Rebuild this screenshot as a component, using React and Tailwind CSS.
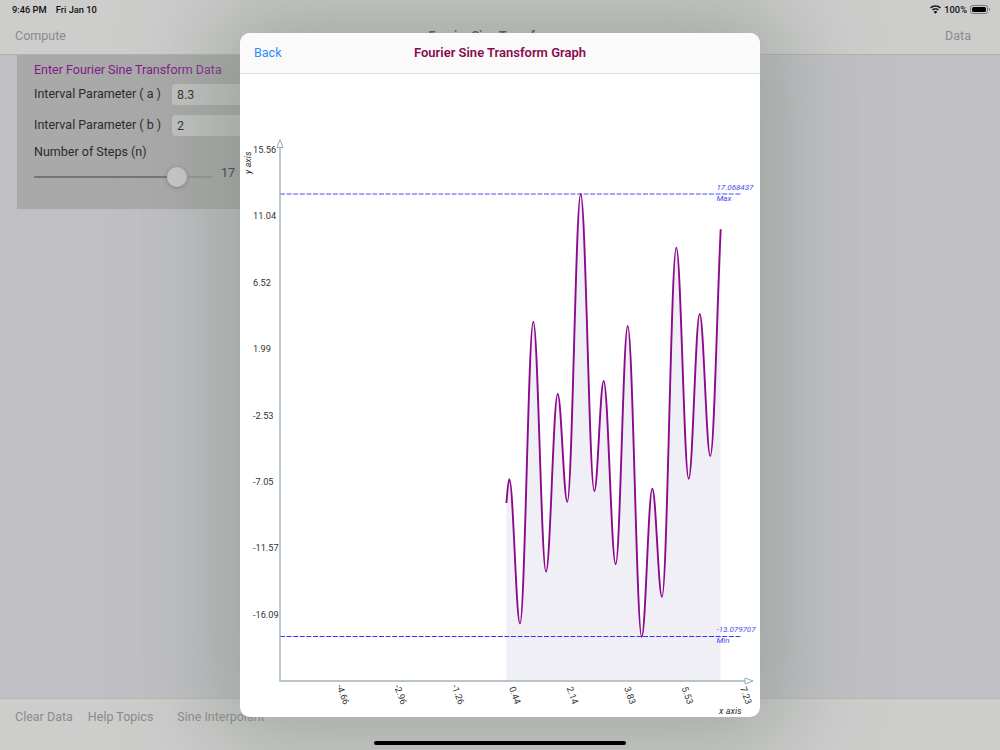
const extrema = [
  [506.4, 503], [509.3, 479.3], [520, 623.5], [533.3, 321.7], [546, 571.7], [557.7, 394], [567.3, 501.7],
  [580.7, 194], [594.3, 491], [603.7, 381], [615.7, 564.3], [627.7, 326], [641.7, 636.7], [652.3, 488.7],
  [662, 596.7], [676.3, 247.7], [688.7, 478.7], [699.7, 314], [710.3, 456], [720.7, 229.3],
];

function curvePath() {
  let d = `M${extrema[0][0]} ${extrema[0][1]}`;
  for (let i = 1; i < extrema.length; i++) {
    const [x0, y0] = extrema[i - 1];
    const [x1, y1] = extrema[i];
    const k = (x1 - x0) * 0.3642;
    const c1y = i === 1 ? y0 + (y1 - y0) * 0.5 : y0;
    const isLast = i === extrema.length - 1;
    const c2y = isLast ? y1 + (y0 - y1) * 0.35 : y1;
    d += ` C${(x0 + k).toFixed(2)} ${c1y.toFixed(2)} ${(x1 - k).toFixed(2)} ${c2y.toFixed(2)} ${x1} ${y1}`;
  }
  return d;
}

const yLabels = [
  ["15.56", 152.6], ["11.04", 219.2], ["6.52", 285.6], ["1.99", 351.8], ["-2.53", 418.6], ["-7.05", 484.8], ["-11.57", 551.2], ["-16.09", 617.6],
];
const xLabels = [
  ["-4.66", 336.5, 686], ["-2.96", 394, 686], ["-1.26", 451.5, 686], ["0.44", 509, 688], ["2.14", 566.5, 688], ["3.83", 624, 688], ["5.53", 681.5, 688], ["7.23", 740, 688],
];

function Wifi() {
  return (
    <svg width="11" height="9" viewBox="0 0 22 17">
      <path d="M11 0C6.8 0 3 1.6 0.2 4.3L2.2 6.4C4.5 4.2 7.6 2.9 11 2.9s6.5 1.3 8.8 3.5l2-2.1C19 1.6 15.2 0 11 0z" fill="#111" />
      <path d="M11 5.8c-2.6 0-5 1-6.8 2.7l2 2.1C7.5 9.4 9.2 8.7 11 8.7s3.5.7 4.8 1.9l2-2.1C16 6.8 13.6 5.8 11 5.8z" fill="#111" />
      <path d="M11 11.6c-1.5 0-2.8.6-3.8 1.5L11 17l3.8-3.9c-1-.9-2.3-1.5-3.8-1.5z" fill="#111" />
    </svg>
  );
}

function Battery() {
  return (
    <div className="flex items-center">
      <div className="w-[18px] h-[9px] rounded-[2.5px] border border-[#77787a] p-px">
        <div className="w-full h-full rounded-[1.5px] bg-black" />
      </div>
      <div className="w-px h-[3px] rounded-r-sm bg-[#77787a] ml-px" />
    </div>
  );
}

function Chart() {
  return (
    <svg width="520" height="643" viewBox="240 74 520 643" className="block">
      <path d={`${curvePath()} L720.7 681 L506.4 681 Z`} fill="#f1eff6" />
      <line x1="280" y1="194" x2="741" y2="194" stroke="#4a4af5" strokeWidth="1" strokeDasharray="5 1.6" />
      <line x1="280" y1="636.5" x2="741" y2="636.5" stroke="#3434f5" strokeWidth="1" strokeDasharray="5 1.6" />
      <path d={curvePath()} fill="none" stroke="#8b0a8d" strokeWidth="1.9" />
      <path d="M280 146 V681 H746" fill="none" stroke="#a3b4bf" strokeWidth="1.4" />
      <path d="M280 139.5 L283 147.5 H277 Z" fill="#fff" stroke="#8ba1af" strokeWidth="0.9" />
      <path d="M753 681 L745 678 V684 Z" fill="#fff" stroke="#8ba1af" strokeWidth="0.9" />
      <g fontFamily="Roboto, sans-serif" fontSize="9.2" fill="#333">
        {yLabels.map(([t, y]) => (
          <text key={t} x="253" y={y}>{t}</text>
        ))}
        {xLabels.map(([t, x, y]) => (
          <text key={t} x={x} y={y} transform={`rotate(70 ${x} ${y})`}>{t}</text>
        ))}
        <text x="0" y="0" fontStyle="italic" transform="translate(251 174) rotate(-90)">y axis</text>
        <text x="719" y="714" fontStyle="italic">x axis</text>
      </g>
      <g fontFamily="Roboto, sans-serif" fontSize="8" fontStyle="italic" fill="#4a4af5">
        <text x="716.5" y="189.5">17.068437</text>
        <text x="716.5" y="201">Max</text>
        <text x="716.5" y="632">-13.079707</text>
        <text x="716.5" y="643">Min</text>
      </g>
    </svg>
  );
}

export default function App() {
  return (
    <div className="relative w-[1000px] h-[750px] overflow-hidden flex flex-col bg-[#c0c0c4] text-[12.5px] text-[#2b2b2b] font-['Roboto',sans-serif] whitespace-nowrap">
      <header className="h-[55px] shrink-0 bg-[#cdcdcc] border-b border-[#b0b1b0] flex flex-col">
        <div className="h-[19px] flex items-center justify-between pl-3 pr-[10px] text-[9.3px] font-medium text-[#111]">
          <div className="flex gap-[9px]">
            <span>9:46 PM</span>
            <span>Fri Jan 10</span>
          </div>
          <div className="flex items-center gap-[3px]">
            <Wifi />
            <span>100%</span>
            <Battery />
          </div>
        </div>
        <nav className="flex-1 grid grid-cols-3 items-center pl-[15px] pr-[29px] text-[#8a8b8b]">
          <span>Compute</span>
          <span className="text-center font-semibold text-[#7f1a55]">Fourier Sine Transform</span>
          <span className="text-right">Data</span>
        </nav>
      </header>

      <main className="flex-1 min-h-0">
        <section className="ml-[17px] w-[300px] h-[154px] bg-[#a9a9a9] pl-[17px] pt-[6px]">
          <h2 className="h-[18px] leading-[18px] text-[#7f1a8a]">Enter Fourier Sine Transform Data</h2>
          <div className="mt-[5px] flex items-center">
            <span className="w-[138px]">Interval Parameter ( a )</span>
            <div className="w-[120px] h-[21px] rounded bg-[#c2c3c1] pl-[5px] leading-[21px]">8.3</div>
          </div>
          <div className="mt-[10px] flex items-center">
            <span className="w-[138px]">Interval Parameter ( b )</span>
            <div className="w-[120px] h-[21px] rounded bg-[#c2c3c1] pl-[5px] leading-[21px]">2</div>
          </div>
          <div className="mt-[7px] h-[17px] leading-[17px]">Number of Steps (n)</div>
          <div className="mt-[5px] h-[24px] flex items-center">
            <div className="w-[133px] h-[2px] rounded-l bg-[#757575]" />
            <div className="w-5 h-5 rounded-full bg-[#c9c9c9] shadow-[0_1px_4px_rgba(0,0,0,0.25)]" />
            <div className="w-[25px] h-[2px] rounded-r bg-[#959595]" />
            <span className="ml-[9px] -mt-[7px]">17</span>
          </div>
        </section>
      </main>

      <footer className="h-[52px] shrink-0 bg-[#cdcdcc] border-t border-[#b5b6b5] pl-[15px] pt-[9px] flex items-start text-[#8a8b8b]">
        <span>Clear Data</span>
        <span className="ml-[15px]">Help Topics</span>
        <span className="ml-[24px]">Sine Interpolant</span>
      </footer>

      <div className="absolute left-[240px] top-[33px] w-[520px] h-[684px] rounded-[10px] bg-white overflow-hidden shadow-[0_0_90px_25px_rgba(130,140,130,0.55)]">
        <div className="h-[41px] bg-[#fafafa] border-b border-[#dcdcdc] relative flex items-center justify-center">
          <span className="absolute left-[14px] text-[#2f8ef6] text-[12.5px]">Back</span>
          <span className="font-semibold text-[13px] text-[#8a0a50]">Fourier Sine Transform Graph</span>
        </div>
        <Chart />
      </div>

      <div className="absolute left-[374px] top-[741px] w-[252px] h-[4px] rounded-full bg-black" />
    </div>
  );
}
